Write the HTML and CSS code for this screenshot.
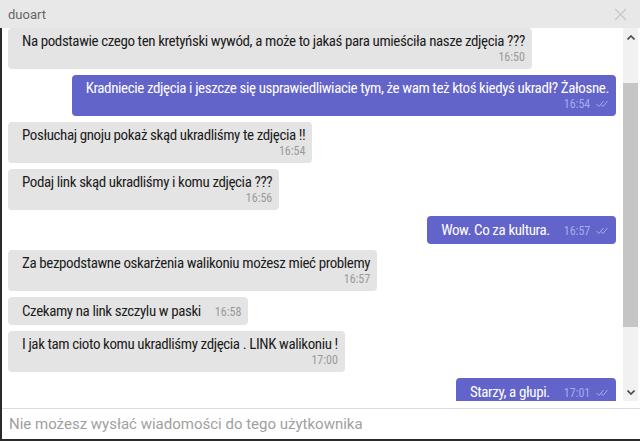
FILE: index.html
```html
<!DOCTYPE html>
<html lang="pl">
<head>
  <meta charset="UTF-8" />
  <meta name="viewport" content="width=device-width, initial-scale=1.0" />
  <title>duoart</title>
  <link rel="stylesheet" href="styles.css">
</head>
<body>
  <div class="chat">
    <div class="chat-head">
      <span class="chat-title">duoart</span>
      <svg class="close" width="13" height="13" viewBox="0 0 13 13">
        <path d="M1 1 L12 12 M12 1 L1 12" />
      </svg>
    </div>

    <div class="chat-body">
      <div class="thread">
        <div class="messages">
          <div class="msg in">
            <div class="text">Na podstawie czego ten kretyński wywód, a może to jakaś para umieściła nasze zdjęcia ???</div>
            <div class="time">16:50</div>
          </div>
          <div class="msg out">
            <div class="text">Kradniecie zdjęcia i jeszcze się usprawiedliwiacie tym, że wam też ktoś kiedyś ukradł? Żałosne.</div>
            <div class="time">16:54 <svg class="ticks" width="13" height="8" viewBox="0 0 13 8"><path d="M0.5 4 L3 6.5 L7.5 1 M5 4.5 L7 6.5 L11.5 1" /></svg></div>
          </div>
          <div class="msg in">
            <div class="text">Posłuchaj gnoju pokaż skąd ukradliśmy te zdjęcia !!</div>
            <div class="time">16:54</div>
          </div>
          <div class="msg in">
            <div class="text">Podaj link skąd ukradliśmy i komu zdjęcia ???</div>
            <div class="time">16:56</div>
          </div>
          <div class="msg out short">
            <span class="text">Wow. Co za kultura.</span>
            <span class="time">16:57 <svg class="ticks" width="13" height="8" viewBox="0 0 13 8"><path d="M0.5 4 L3 6.5 L7.5 1 M5 4.5 L7 6.5 L11.5 1" /></svg></span>
          </div>
          <div class="msg in">
            <div class="text">Za bezpodstawne oskarżenia walikoniu możesz mieć problemy</div>
            <div class="time">16:57</div>
          </div>
          <div class="msg in short">
            <span class="text">Czekamy na link szczylu w paski</span>
            <span class="time">16:58</span>
          </div>
          <div class="msg in">
            <div class="text">I jak tam cioto komu ukradliśmy zdjęcia . LINK walikoniu !</div>
            <div class="time">17:00</div>
          </div>
          <div class="msg out short">
            <span class="text">Starzy, a głupi.</span>
            <span class="time">17:01 <svg class="ticks" width="13" height="8" viewBox="0 0 13 8"><path d="M0.5 4 L3 6.5 L7.5 1 M5 4.5 L7 6.5 L11.5 1" /></svg></span>
          </div>
        </div>

        <div class="scrollbar">
          <svg class="arrow" width="8" height="5" viewBox="0 0 8 5"><path d="M0.5 4.5 L4 1 L7.5 4.5" /></svg>
          <div class="thumb"></div>
          <svg class="arrow" width="8" height="5" viewBox="0 0 8 5"><path d="M0.5 0.5 L4 4 L7.5 0.5" /></svg>
        </div>
      </div>

      <div class="composer">Nie możesz wysłać wiadomości do tego użytkownika</div>
    </div>
  </div>
</body>
</html>
```

FILE: styles.css
```css
*, *::before, *::after { box-sizing: border-box; }
html, body { margin: 0; padding: 0; }
body {
  font-family: Roboto, "Liberation Sans", sans-serif;
  background-color: #fff;
  width: 640px;
  height: 441px;
  overflow: hidden;
}
.chat {
  display: flex;
  flex-direction: column;
  height: 441px;
}
.chat-head {
  height: 28px;
  flex: none;
  display: flex;
  align-items: center;
  justify-content: space-between;
  padding: 0 13px 0 8px;
  background-color: #e8e8e8;
}
.chat-title { font-size: 13px; color: #666; }
.close path { stroke: #c9c9c9; stroke-width: 1.4; fill: none; }

.chat-body {
  flex: 1;
  display: flex;
  flex-direction: column;
  border-left: 2px solid #2b2b2b;
  border-bottom: 2px solid #2b2b2b;
}
.thread {
  height: 373px;
  flex: none;
  display: flex;
  margin-bottom: 7px;
  overflow: hidden;
}
.messages {
  flex: 1;
  display: flex;
  flex-direction: column;
  align-items: flex-start;
  gap: 6px;
  padding: 0 7px 0 6px;
  overflow: hidden;
  font-family: "Liberation Sans Narrow", "Roboto Condensed", "Arial Narrow", sans-serif;
  font-stretch: condensed;
}
.msg {
  flex: none;
  max-width: 100%;
  padding: 5px 7px 5px 14px;
  border-radius: 4px;
  background-color: #e4e4e4;
  color: #1c1c1c;
}
.msg.out {
  align-self: flex-end;
  background-color: #6364c9;
  color: #fff;
}
.msg .text { font-size: 15px; line-height: 17px; letter-spacing: -0.4px; }
.msg .time {
  font-size: 12px;
  line-height: 14px;
  color: #9a9a9a;
  text-align: right;
}
.msg.out .time { color: #a7aaee; }
.ticks { margin-left: 3px; vertical-align: 0; }
.ticks path { stroke: #a7aaee; stroke-width: 1; fill: none; }

.msg.short {
  display: flex;
  align-items: baseline;
  padding: 6px 7px 5px 14px;
}
.msg.short .time { margin-left: 14px; }

.scrollbar {
  width: 15px;
  flex: none;
  margin-right: 2px;
  display: flex;
  flex-direction: column;
  align-items: center;
  background-color: #f1f1f1;
}
.arrow { flex: none; margin: 7px 0 6px; }
.arrow path { stroke: #4a4a4a; stroke-width: 1.6; fill: none; }
.thumb {
  width: 15px;
  height: 244px;
  margin-top: 37px;
  margin-bottom: auto;
  background-color: #c5c5c5;
}

.composer {
  flex: 1;
  display: flex;
  align-items: center;
  padding: 0 7px;
  border-top: 1px solid #dcdcdc;
  font-size: 15px;
  color: #a0a0a0;
}
```
